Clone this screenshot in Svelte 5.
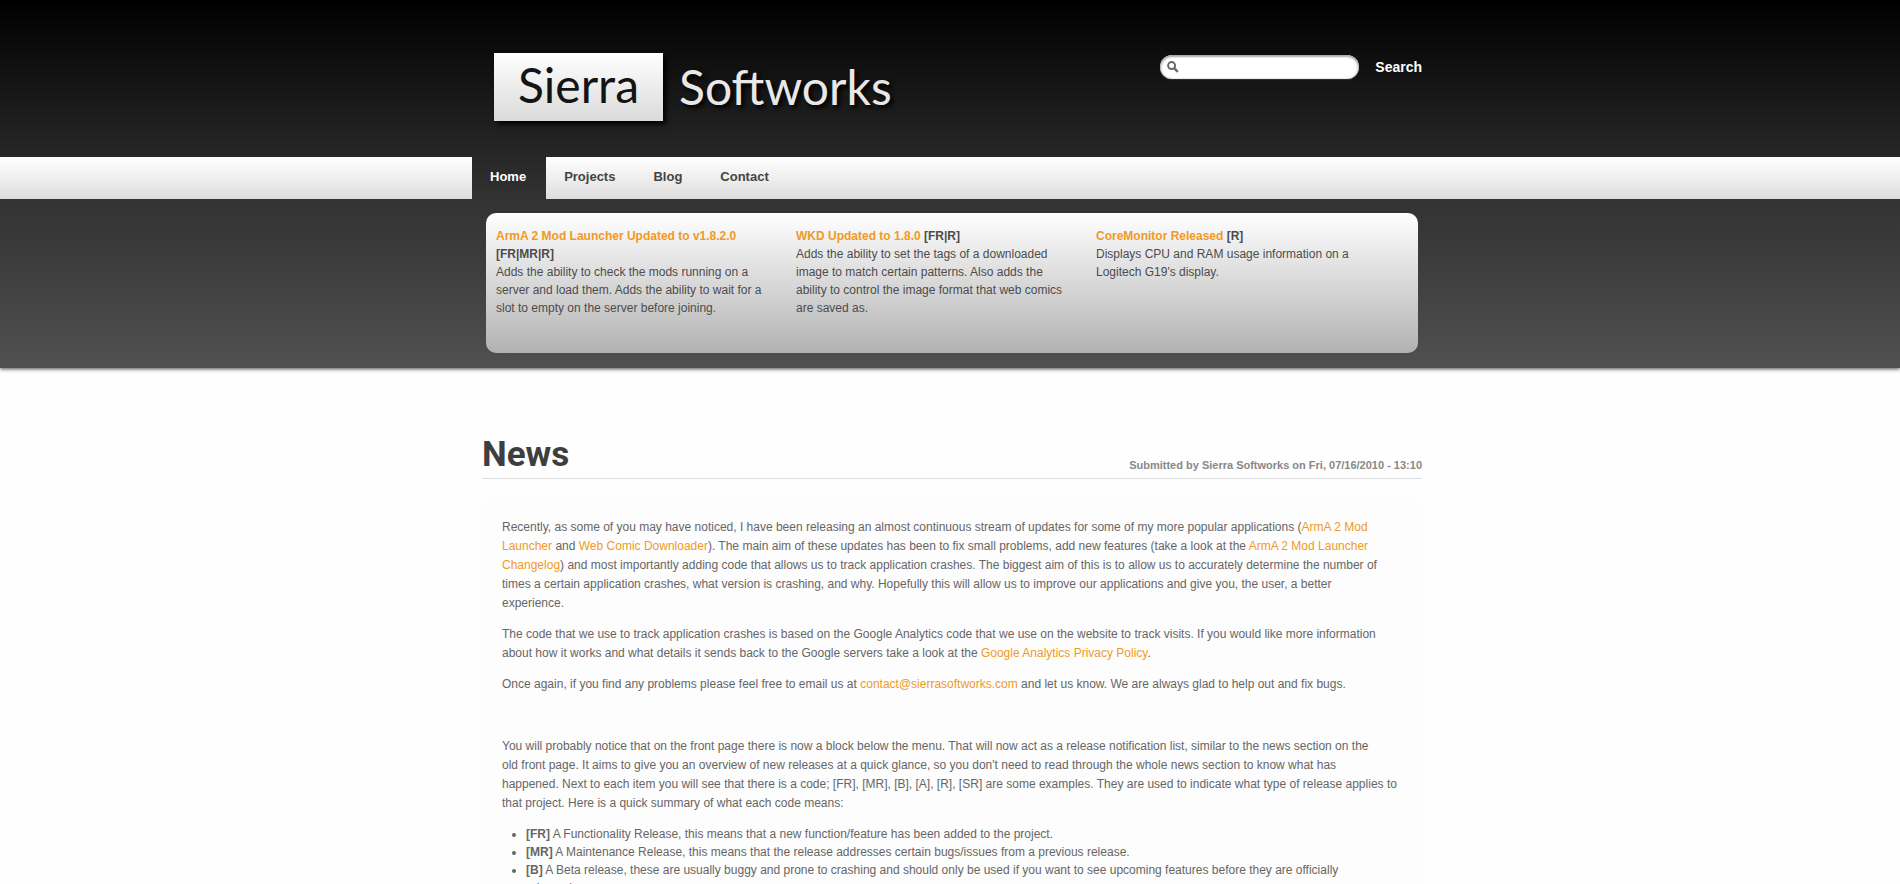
<script>
  const tabs = [
    { label: 'Home', active: true },
    { label: 'Projects', active: false },
    { label: 'Blog', active: false },
    { label: 'Contact', active: false }
  ];

  const releases = [
    {
      title: 'ArmA 2 Mod Launcher Updated to v1.8.2.0',
      code: '[FR|MR|R]',
      text: 'Adds the ability to check the mods running on a server and load them. Adds the ability to wait for a slot to empty on the server before joining.'
    },
    {
      title: 'WKD Updated to 1.8.0',
      code: '[FR|R]',
      text: 'Adds the ability to set the tags of a downloaded image to match certain patterns. Also adds the ability to control the image format that web comics are saved as.'
    },
    {
      title: 'CoreMonitor Released',
      code: '[R]',
      text: "Displays CPU and RAM usage information on a Logitech G19's display."
    }
  ];
</script>

<header>
  <div class="masthead">
    <a class="logo" href="/">
      <span class="box">Sierra</span>
      <span class="rest">Softworks</span>
    </a>
    <form class="search" role="search">
      <label class="field">
        <svg width="12" height="12" viewBox="0 0 12 12" aria-hidden="true">
          <circle cx="4.6" cy="4.6" r="3.5" fill="none" stroke="#6a6a6a" stroke-width="2" />
          <path d="M7.2 7.2L10.8 10.8" stroke="#6a6a6a" stroke-width="2.4" />
        </svg>
        <input type="text" aria-label="Search" />
      </label>
      <button type="submit">Search</button>
    </form>
  </div>
  <nav>
    <ul>
      {#each tabs as tab}
        <li><a href="/" class:active={tab.active}>{tab.label}</a></li>
      {/each}
    </ul>
  </nav>
  <div class="band">
    <div class="releases">
      {#each releases as item}
        <section>
          <h2><a href="/">{item.title}</a> {item.code}</h2>
          <p>{item.text}</p>
        </section>
      {/each}
    </div>
  </div>
</header>

<main>
  <div class="heading">
    <h1>News</h1>
    <span>Submitted by Sierra Softworks on Fri, 07/16/2010 - 13:10</span>
  </div>
  <article>
    <p>
      Recently, as some of you may have noticed, I have been releasing an almost continuous stream of updates for some of my more popular applications (<a href="/">ArmA 2 Mod Launcher</a> and <a href="/">Web Comic Downloader</a>). The main aim of these updates has been to fix small problems, add new features (take a look at the <a href="/">ArmA 2 Mod Launcher Changelog</a>) and most importantly adding code that allows us to track application crashes. The biggest aim of this is to allow us to accurately determine the number of times a certain application crashes, what version is crashing, and why. Hopefully this will allow us to improve our applications and give you, the user, a better<br />
      experience.
    </p>
    <p>
      The code that we use to track application crashes is based on the Google Analytics code that we use on the website to track visits. If you would like more information about how it works and what details it sends back to the Google servers take a look at the <a href="/">Google Analytics Privacy Policy</a>.
    </p>
    <p>
      Once again, if you find any problems please feel free to email us at <a href="/">contact@sierrasoftworks.com</a> and let us know. We are always glad to help out and fix bugs.
    </p>
    <p>&nbsp;</p>
    <p>
      You will probably notice that on the front page there is now a block below the menu. That will now act as a release notification list, similar to the news section on the<br />
      old front page. It aims to give you an overview of new releases at a quick glance, so you don't need to read through the whole news section to know what has<br />
      happened. Next to each item you will see that there is a code; [FR], [MR], [B], [A], [R], [SR] are some examples. They are used to indicate what type of release applies to that project. Here is a quick summary of what each code means:
    </p>
    <ul>
      <li><strong>[FR]</strong> A Functionality Release, this means that a new function/feature has been added to the project.</li>
      <li><strong>[MR]</strong> A Maintenance Release, this means that the release addresses certain bugs/issues from a previous release.</li>
      <li>
        <strong>[B]</strong> A Beta release, these are usually buggy and prone to crashing and should only be used if you want to see upcoming features before they are officially<br />
        released.
      </li>
    </ul>
  </article>
</main>

<style>
  :global(body) {
    margin: 0;
    background: #fefefe;
    color: #666;
    font: 12px/18px "Liberation Sans", Arial, sans-serif;
  }

  a {
    color: #f09a26;
    text-decoration: none;
  }

  header {
    background: linear-gradient(#000, #272727 157px, #323232 199px, #505050);
    box-shadow: 0 1px 4px rgba(0, 0, 0, 0.7);
  }

  .masthead {
    box-sizing: border-box;
    max-width: 944px;
    height: 157px;
    margin: 0 auto;
    padding: 53px 0 0 16px;
    display: flex;
    justify-content: space-between;
    align-items: flex-start;
  }

  .logo {
    display: flex;
    align-items: flex-start;
    gap: 16px;
    font: 48px/64px "Century Gothic", "URW Gothic", Lato, sans-serif;
  }

  .box {
    box-sizing: border-box;
    width: 169px;
    height: 68px;
    text-align: center;
    color: #141414;
    background: linear-gradient(#fff, #dadada);
    box-shadow: 3px 3px 5px #000;
  }

  .rest {
    padding-top: 2px;
    color: #e8e8e8;
    text-shadow: 3px 3px 4px #000;
  }

  .search {
    display: flex;
    align-items: center;
    gap: 16px;
    padding-top: 2px;
  }

  .field {
    box-sizing: border-box;
    width: 199px;
    height: 24px;
    display: flex;
    align-items: center;
    gap: 4px;
    padding: 0 8px 0 7px;
    border-radius: 12px;
    background: #fff;
    box-shadow: inset 0 1px 2px 1px #a4a8ac, 0 1px 1px #333;
  }

  .field svg {
    flex: none;
  }

  input {
    flex: 1;
    min-width: 0;
    border: 0;
    padding: 0;
    outline: 0;
    background: none;
    font: inherit;
  }

  button {
    border: 0;
    padding: 0;
    background: none;
    color: #fff;
    font: bold 14px/24px "Liberation Sans", Arial, sans-serif;
  }

  nav {
    background: linear-gradient(#fff, #dedede);
  }

  nav ul {
    max-width: 956px;
    margin: 0 auto;
    padding: 0;
    display: flex;
    list-style: none;
  }

  nav a {
    display: block;
    padding: 0 20px 2px 18px;
    color: #444;
    font: bold 13px/40px "Liberation Sans", Arial, sans-serif;
  }

  nav a.active {
    color: #fff;
    background: linear-gradient(#272727, #323232);
  }

  .band {
    max-width: 932px;
    margin: 0 auto;
    padding: 14px 0 15px 4px;
  }

  .releases {
    box-sizing: border-box;
    min-height: 140px;
    padding: 14px 10px;
    display: grid;
    grid-template-columns: repeat(3, 280px);
    gap: 20px;
    border-radius: 10px;
    background: linear-gradient(#fff, #b2b2b2);
    color: #4c4c4c;
  }

  h2 {
    margin: 0;
    font: inherit;
    font-weight: bold;
  }

  .releases p {
    margin: 0;
  }

  main {
    max-width: 940px;
    margin: 0 auto;
    padding: 60px 0 0 4px;
  }

  .heading {
    display: flex;
    justify-content: space-between;
    align-items: flex-end;
    height: 50px;
    border-bottom: 1px solid #ddd;
  }

  h1 {
    margin: 0;
    color: #3e3e3e;
    font: bold 35px/46px Roboto, sans-serif;
  }

  .heading span {
    color: #888;
    font-weight: bold;
    font-size: 11px;
    line-height: 26px;
  }

  article {
    margin-top: 19px;
    padding: 20px;
    background: #fdfdfd;
  }

  article p {
    margin: 0 0 12px;
    line-height: 19px;
  }

  article ul {
    margin: 0;
    padding-left: 24px;
  }
</style>
